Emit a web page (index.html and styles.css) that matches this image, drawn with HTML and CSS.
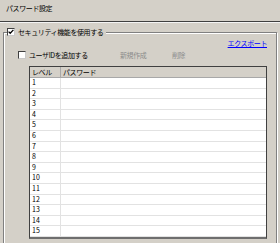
FILE: index.html
```html
<!DOCTYPE html>
<html lang="ja">
<head>
    <meta charset="UTF-8">
    <title>パスワード設定</title>
    <link rel="stylesheet" href="styles.css">
</head>
<body>
    <div class="title">パスワード設定</div>
    <div class="rule"></div>

    <fieldset class="group">
        <legend>
            <span class="cb">
                <svg width="6" height="6" viewBox="0 0 6 6"><path d="M0.6 2.6 L2.2 4.3 L5.4 0.9" fill="none" stroke="#000" stroke-width="1.3"/></svg>
            </span>
            <span>セキュリティ機能を使用する</span>
        </legend>

        <div class="export"><a href="#">エクスポート</a></div>

        <div class="toolbar">
            <label class="opt"><span class="cb"></span><span>ユーザIDを追加する</span></label>
            <button class="btn" disabled>新規作成</button>
            <button class="btn" disabled>削除</button>
        </div>

        <table class="grid">
            <colgroup><col class="c-level"><col></colgroup>
            <thead>
                <tr><th>レベル</th><th>パスワード</th></tr>
            </thead>
            <tbody id="rows"></tbody>
        </table>
    </fieldset>

    <script>
        // 15レベル分の行を作る
        const rows = document.getElementById('rows');
        for (let i = 1; i <= 15; i++) {
            const tr = document.createElement('tr');
            tr.innerHTML = `<td class="num">${i}</td><td></td>`;
            rows.appendChild(tr);
        }
    </script>
</body>
</html>
```

FILE: styles.css
```css
body {
    margin: 0;
    background-color: #d4d0c8;
    font-family: "Noto Sans CJK JP", sans-serif;
    font-size: 7px;
    letter-spacing: -0.4px;
    color: #000;
    overflow: hidden;
}
.title {
    padding: 4px 6px 8px;
    line-height: 9px;
}
.rule {
    border-top: 1px solid #404040;
    border-bottom: 1px solid #f4f4f4;
}

/* グループ枠 */
.group {
    margin: 4px 3px 0;
    padding: 0 9px 20px 14px;
    min-width: 0;
    border: 1px solid #808080;
    box-shadow: 1px 1px 0 #fff, inset 1px 1px 0 #fff;
}
.group legend {
    display: flex;
    align-items: center;
    gap: 3px;
    margin-left: -11px;
    padding: 0 3px 0 0;
    line-height: 10px;
    background-color: #d4d0c8;
}
.cb {
    display: inline-flex;
    align-items: center;
    justify-content: center;
    width: 8px;
    height: 8px;
    box-sizing: border-box;
    background: #fff;
    border: 1px solid;
    border-color: #404040 #c8c8c8 #c8c8c8 #404040;
}
.export {
    margin-top: 1px;
    text-align: right;
    line-height: 10px;
}
.export a {
    color: #0000ff;
}
.toolbar {
    display: grid;
    grid-template-columns: 102px 52px auto;
    align-items: center;
    margin-top: 2px;
    height: 10px;
}
.opt {
    display: flex;
    align-items: center;
    gap: 3px;
    line-height: 10px;
}
.btn {
    justify-self: start;
    padding: 0;
    border: none;
    background: none;
    font: inherit;
    letter-spacing: inherit;
    line-height: 10px;
    color: #8c8c8c;
}

/* 一覧 */
.grid {
    margin: 6px 0 0 11px;
    width: 238px;
    table-layout: fixed;
    border-collapse: separate;
    border-spacing: 0;
    border: 1px solid #404040;
    border-bottom: 2px solid #6e6e6e;
    background: #fff;
}
.c-level {
    width: 31px;
}
.grid th {
    padding: 0 2px;
    text-align: left;
    font-weight: normal;
    line-height: 10px;
    background: #d4d0c8;
    border-bottom: 1px solid #a8a8a8;
}
.grid th:first-child {
    border-right: 1px solid #a8a8a8;
}
.grid td {
    padding: 0 2px;
    height: 9.6px;
    line-height: 9.6px;
    border-bottom: 1px solid #e2e2e2;
}
.grid td:first-child {
    border-right: 1px solid #e2e2e2;
}
.num {
    letter-spacing: 0.2px;
}
```
